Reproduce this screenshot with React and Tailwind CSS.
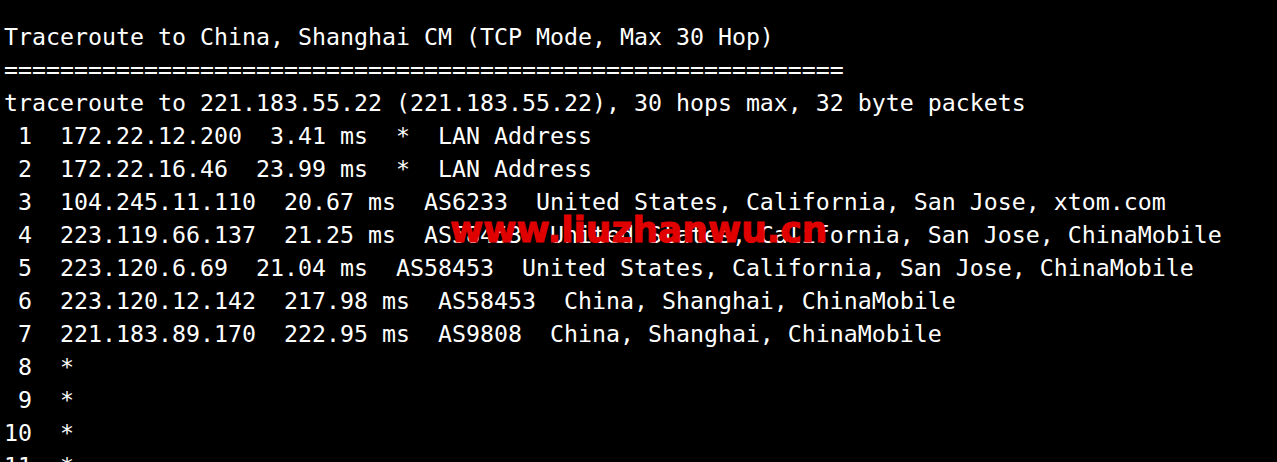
const lines = [
  'Traceroute to China, Shanghai CM (TCP Mode, Max 30 Hop)',
  '============================================================',
  'traceroute to 221.183.55.22 (221.183.55.22), 30 hops max, 32 byte packets',
  ' 1  172.22.12.200  3.41 ms  *  LAN Address',
  ' 2  172.22.16.46  23.99 ms  *  LAN Address',
  ' 3  104.245.11.110  20.67 ms  AS6233  United States, California, San Jose, xtom.com',
  ' 4  223.119.66.137  21.25 ms  AS58453  United States, California, San Jose, ChinaMobile',
  ' 5  223.120.6.69  21.04 ms  AS58453  United States, California, San Jose, ChinaMobile',
  ' 6  223.120.12.142  217.98 ms  AS58453  China, Shanghai, ChinaMobile',
  ' 7  221.183.89.170  222.95 ms  AS9808  China, Shanghai, ChinaMobile',
  ' 8  *',
  ' 9  *',
  '10  *',
  '11  *',
];

export default function App() {
  return (
    <div className="relative h-[462px] w-full overflow-hidden bg-black">
      <pre className="pl-[4px] pt-[20px] font-['DejaVu_Sans_Mono',monospace] text-[23.25px] leading-[33px] text-white">
        {lines.map((line, i) => (
          <div key={i}>{line}</div>
        ))}
      </pre>
      {/* watermark */}
      <span className="absolute left-[450px] top-[212px] font-['DejaVu_Sans',sans-serif] text-[36px] font-bold leading-none text-[#e00000] [-webkit-text-stroke:1px_#e00000]">
        www.liuzhanwu.cn
      </span>
    </div>
  );
}
